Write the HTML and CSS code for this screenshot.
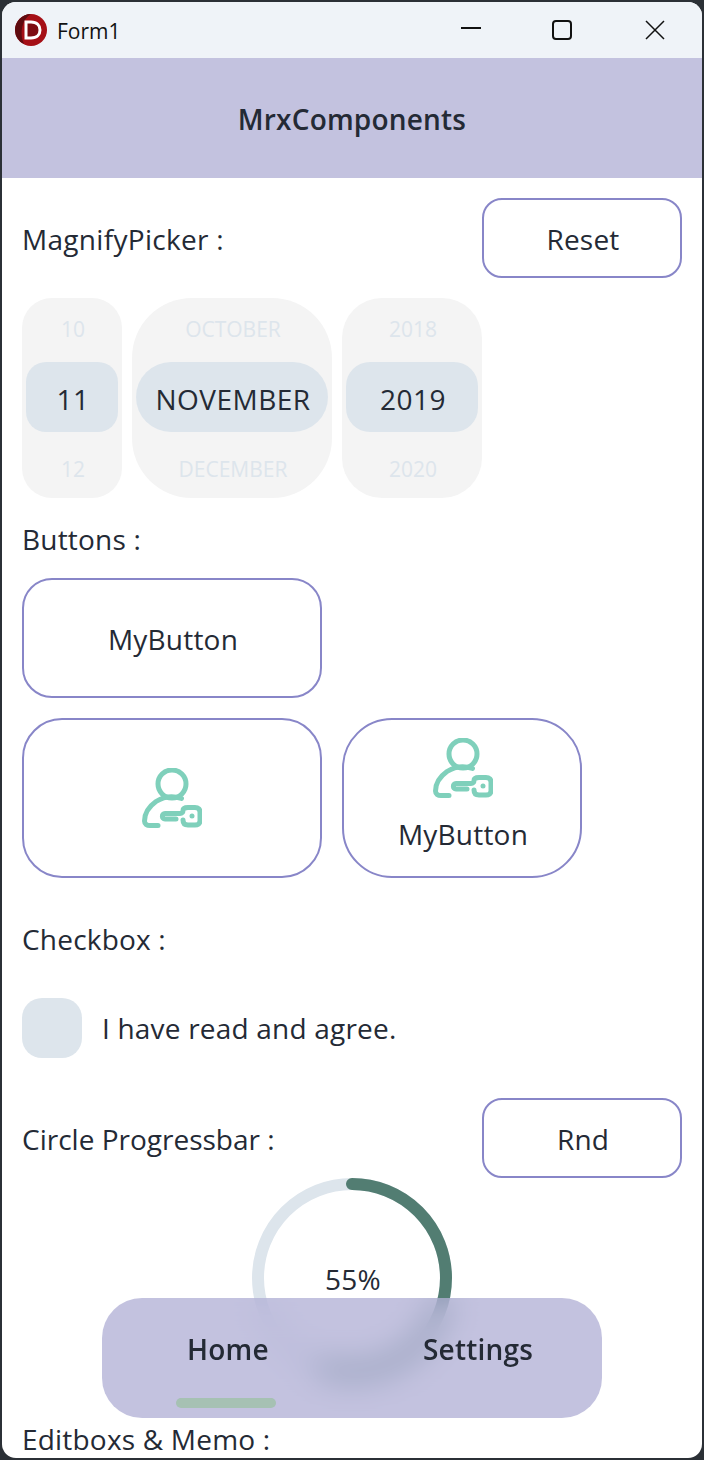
FILE: index.html
```html
<!DOCTYPE html>
<html lang="en">
<head>
    <meta charset="UTF-8">
    <meta name="viewport" content="width=device-width, initial-scale=1.0">
    <title>Form1</title>
    <link rel="stylesheet" href="styles.css">
</head>
<body>
    <div class="window">
        <!-- Title bar -->
        <div class="titlebar">
            <svg class="app-logo" width="34" height="34" viewBox="0 0 34 34">
                <circle cx="17" cy="17" r="16" fill="#a50f16"/>
                <path d="M1 17A16 16 0 0 1 17 1C8 6 5 20 10 31A16 16 0 0 1 1 17Z" fill="#5e0b10"/>
                <path d="M12 9h5c6 0 9 3.500 9 8s-3 8-9 8h-5Z" fill="#7d0c12" stroke="#fff" stroke-width="3"/>
            </svg>
            <span class="form-title">Form1</span>
            <div class="window-controls">
                <svg width="22" height="22" viewBox="0 0 22 22"><path d="M1 9h20" stroke="#111" stroke-width="2"/></svg>
                <svg width="22" height="22" viewBox="0 0 22 22"><rect x="2" y="2" width="18" height="18" rx="3" fill="none" stroke="#111" stroke-width="2"/></svg>
                <svg width="22" height="22" viewBox="0 0 22 22"><path d="M2 2l18 18M20 2L2 20" stroke="#111" stroke-width="1.500"/></svg>
            </div>
        </div>

        <div class="app-header">MrxComponents</div>

        <div class="content">
            <div class="row">
                <span class="label">MagnifyPicker :</span>
                <button class="btn btn-small" type="button">Reset</button>
            </div>

            <!-- Date picker wheels -->
            <div class="picker">
                <div class="wheel wheel-day">
                    <span class="wheel-item">10</span>
                    <span class="wheel-current">11</span>
                    <span class="wheel-item">12</span>
                </div>
                <div class="wheel wheel-month">
                    <span class="wheel-item">OCTOBER</span>
                    <span class="wheel-current">NOVEMBER</span>
                    <span class="wheel-item">DECEMBER</span>
                </div>
                <div class="wheel wheel-year">
                    <span class="wheel-item">2018</span>
                    <span class="wheel-current">2019</span>
                    <span class="wheel-item">2020</span>
                </div>
            </div>

            <div class="label label-buttons">Buttons :</div>
            <button class="btn btn-wide" type="button">MyButton</button>
            <div class="button-row">
                <button class="btn btn-icon" type="button">
                    <svg class="key-user" width="60" height="60" viewBox="0 0 60 60"><use href="#keyUser"/></svg>
                </button>
                <button class="btn btn-stack" type="button">
                    <svg class="key-user" width="60" height="60" viewBox="0 0 60 60"><use href="#keyUser"/></svg>
                    <span>MyButton</span>
                </button>
            </div>

            <div class="label label-checkbox">Checkbox :</div>
            <label class="checkbox-row">
                <span class="checkbox"></span>
                <span class="label">I have read and agree.</span>
            </label>

            <div class="row row-progress">
                <span class="label">Circle Progressbar :</span>
                <button class="btn btn-small" type="button">Rnd</button>
            </div>

            <div class="progress">
                <svg width="200" height="200" viewBox="0 0 200 200">
                    <circle cx="100" cy="100" r="94" fill="none" stroke="#dde5ec" stroke-width="12"/>
                    <circle class="progress-value" cx="100" cy="100" r="94" pathLength="100" transform="rotate(-90 100 100)"/>
                </svg>
                <span class="progress-text">55%</span>
            </div>

            <div class="label label-edit">Editboxs &amp; Memo :</div>
        </div>

        <!-- Floating tab bar -->
        <div class="tabbar">
            <span class="tab tab-home">Home</span>
            <span class="tab tab-settings">Settings</span>
            <span class="tab-marker"></span>
        </div>
    </div>

    <svg class="icon-defs" width="0" height="0">
        <symbol id="keyUser" viewBox="0 0 60 60">
            <g fill="none" stroke="#7fd0bb" stroke-width="5" stroke-linecap="round" stroke-linejoin="round">
                <circle cx="30" cy="16" r="14"/>
                <path d="M39.500 30.500C31 27.500 22 28.500 14 33.500C7 38.500 2.500 46 2.500 53C2.500 56 5 57.500 8 57.500H16"/>
                <path d="M34 51H23C19.500 51 19.500 45.500 23 45.500H38C40 45.500 41 44 41 42.500C41 40.500 43 39.500 46 39.500H53C56.500 39.500 58 41.500 58 44V53C58 55.500 56 57 53 57H46C42.500 57 41 55 41 52"/>
            </g>
            <circle cx="50" cy="48" r="2.500" fill="#7fd0bb"/>
        </symbol>
    </svg>
</body>
</html>
```

FILE: styles.css
```css
/* General page styles */
html, body {
    margin: 0;
    height: 100%;
}
body {
    background-color: #2b3036;
    font-family: "Open Sans", "Noto Sans", sans-serif;
    color: #242a35;
    overflow: hidden;
}
.window {
    position: relative;
    box-sizing: border-box;
    width: 700px;
    height: 1456px;
    margin: 2px;
    background-color: #fff;
    border-radius: 14px;
    overflow: hidden;
}

/* Title bar */
.titlebar {
    display: flex;
    align-items: center;
    height: 56px;
    padding-left: 12px;
    background-color: #eff3f8;
}
.app-logo {
    margin-right: 9px;
}
.form-title {
    padding-top: 2px;
    font-size: 21px;
    color: #111;
}
.window-controls {
    display: flex;
    gap: 71px;
    margin-left: auto;
    margin-right: 36px;
}
.window-controls svg:first-child {
    margin-right: -2px;
}

/* Purple header */
.app-header {
    display: flex;
    align-items: center;
    justify-content: center;
    box-sizing: border-box;
    height: 120px;
    padding-top: 1px;
    background-color: #c3c2df;
    font-size: 28px;
    font-weight: 600;
    letter-spacing: 0.2px;
}

.content {
    padding: 20px 20px 0;
}
.label {
    font-size: 28px;
    line-height: 40px;
    letter-spacing: 0.2px;
}
.row {
    display: flex;
    align-items: center;
    justify-content: space-between;
}
.row .label {
    padding-top: 2px;
    letter-spacing: 0.3px;
}
.row-progress {
    margin-top: 40px;
}
.row-progress .label {
    letter-spacing: 0;
}

/* Buttons */
.btn {
    display: block;
    box-sizing: border-box;
    padding: 2px 0 0 2px;
    background-color: #fff;
    border: 2px solid #8886c8;
    font-family: inherit;
    font-size: 28px;
    letter-spacing: 0.2px;
    color: #242a35;
}
.btn-small {
    width: 200px;
    height: 80px;
    border-radius: 20px;
}
.btn-wide {
    width: 300px;
    height: 120px;
    border-radius: 30px;
}
.button-row {
    display: flex;
    gap: 20px;
    margin-top: 20px;
}
.btn-icon {
    width: 300px;
    height: 160px;
    padding: 0;
    border-radius: 40px;
}
.btn-stack {
    display: flex;
    flex-direction: column;
    align-items: center;
    width: 240px;
    height: 160px;
    padding: 18px 0 0 2px;
    border-radius: 50px;
}
.btn-stack span {
    margin-top: 16px;
    line-height: 40px;
}
.key-user {
    display: block;
    margin: 0 auto;
}

/* Picker wheels */
.picker {
    display: flex;
    gap: 10px;
    margin-top: 20px;
}
.wheel {
    display: flex;
    flex-direction: column;
    align-items: stretch;
    box-sizing: border-box;
    height: 200px;
    padding: 4px;
    background-color: #f4f4f4;
    text-align: center;
}
.wheel-day {
    width: 100px;
    border-radius: 30px;
}
.wheel-month {
    width: 200px;
    border-radius: 60px;
}
.wheel-year {
    width: 140px;
    border-radius: 40px;
}
.wheel-item {
    height: 60px;
    padding-left: 2px;
    font-size: 21px;
    line-height: 54px;
    color: #dde5ec;
}
.wheel-item:last-child {
    height: 62px;
    line-height: 74px;
}
.wheel-current {
    height: 70px;
    padding-left: 2px;
    background-color: #dde5ec;
    font-size: 28px;
    line-height: 74px;
    letter-spacing: 0.5px;
}
.wheel-day .wheel-current {
    border-radius: 20px;
}
.wheel-month .wheel-current {
    border-radius: 35px;
}
.wheel-year .wheel-current {
    border-radius: 24px;
}

.label-buttons {
    margin-top: 21px;
    margin-bottom: 19px;
}
.label-checkbox {
    margin-top: 41px;
}

/* Checkbox */
.checkbox-row {
    display: flex;
    align-items: center;
    gap: 20px;
    margin-top: 39px;
}
.checkbox {
    width: 60px;
    height: 60px;
    background-color: #dde5ec;
    border-radius: 20px;
}

/* Circle progress */
.progress {
    position: relative;
    width: 200px;
    height: 200px;
    margin: 0 auto;
}
.progress svg {
    display: block;
}
.progress-value {
    fill: none;
    stroke: #527d72;
    stroke-width: 12;
    stroke-linecap: round;
    stroke-dasharray: 55 100;
}
.progress-text {
    position: absolute;
    left: 2px;
    right: 0;
    top: 81px;
    text-align: center;
    font-size: 28px;
    line-height: 40px;
    letter-spacing: 0.3px;
}

.label-edit {
    margin-top: 41px;
}

/* Floating tab bar */
.tabbar {
    position: absolute;
    left: 100px;
    top: 1296px;
    width: 500px;
    height: 120px;
    background-color: rgba(163, 162, 206, 0.65);
    -webkit-backdrop-filter: blur(16px);
    backdrop-filter: blur(16px);
    border-radius: 40px;
}
.tab {
    position: absolute;
    top: 31px;
    font-size: 28px;
    font-weight: 600;
    line-height: 40px;
    letter-spacing: 0.2px;
}
.tab-home {
    left: 85px;
}
.tab-settings {
    left: 321px;
}
.tab-marker {
    position: absolute;
    left: 74px;
    top: 100px;
    width: 100px;
    height: 10px;
    background-color: #a6c1b3;
    border-radius: 5px;
}
.icon-defs {
    position: absolute;
}
```
